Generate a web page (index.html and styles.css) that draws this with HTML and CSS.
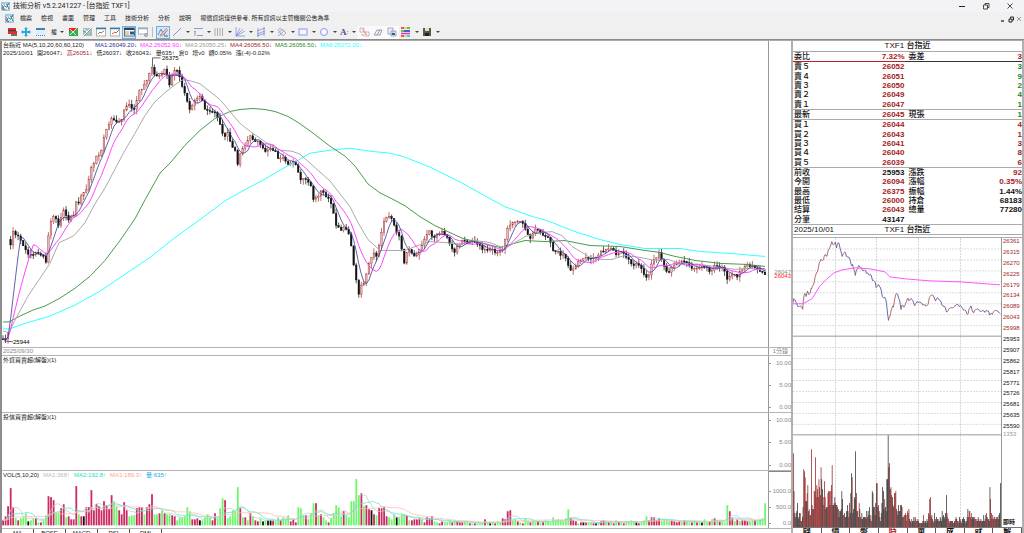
FILE: index.html
```html
<!DOCTYPE html>
<html lang="zh-Hant">
<head>
  <meta charset="UTF-8" />
  <meta name="viewport" content="width=device-width, initial-scale=1.0"/>
  <title>技術分析 v5.2.241227 - [台指近 TXF1]</title>
  <link rel="stylesheet" href="styles.css">
</head>
<body>
  <svg class="defs" aria-hidden="true">
    <symbol id="logo" viewBox="0 0 10 10"><rect width="10" height="10" fill="#9fc9d8"/><path d="M1 2l3 2 1-3 2 3 2-1-1 6-3-2-3 2z" fill="#fff"/><path d="M1 8L4 4l2 2 3-5M1 3l3 6M6 2l3 6" stroke="#27718f" fill="none"/><path d="M1 6l2 3" stroke="#d04040"/></symbol>
  </svg>

  <header class="titlebar">
    <svg class="logo"><use href="#logo"/></svg>
    <h1>技術分析 v5.2.241227 - [台指近 TXF1]</h1>
    <div class="win-buttons">
      <button aria-label="最小化"><svg viewBox="0 0 8 8"><path d="M1 4.500h6" stroke="#222" fill="none"/></svg></button>
      <button aria-label="還原"><svg viewBox="0 0 8 8"><path d="M1.500 3h4v4h-4zM3 3V1.500h4V5.500H5.500" stroke="#222" fill="none" stroke-width=".8"/></svg></button>
      <button aria-label="關閉"><svg viewBox="0 0 8 8"><path d="M1.500 1.500l5 5m0-5l-5 5" stroke="#222" fill="none" stroke-width=".8"/></svg></button>
    </div>
  </header>

  <nav class="menubar">
    <svg class="logo"><use href="#logo"/></svg>
    <a href="#">檔案</a><a href="#">檢視</a><a href="#">畫面</a><a href="#">管理</a><a href="#">工具</a><a href="#">技術分析</a><a href="#">分析</a><a href="#">說明</a>
    <span>報價資訊僅供參考, 所有資訊以主管機關公告為準</span>
    <div class="mdi-buttons">
      <button aria-label="縮小視窗"><svg viewBox="0 0 8 8"><path d="M2 6h3" stroke="#111" fill="none" stroke-width="1.200"/></svg></button>
      <button aria-label="還原視窗"><svg viewBox="0 0 8 8"><path d="M2 4h3v3H2zM3.500 3.500V2h3v3H5" stroke="#222" fill="none"/></svg></button>
      <button aria-label="關閉視窗"><svg viewBox="0 0 8 8"><path d="M2 2l4 4m0-4L2 6" stroke="#888" fill="none" stroke-width=".8"/></svg></button>
    </div>
  </nav>

  <div class="toolbar">
    <button aria-label="報價"><svg viewBox="0 0 12 12"><path d="M2 2h8v2H2zM2 5h9v3H2z" fill="#d33"/><path d="M2 4.500h8M5 9h6" stroke="#444" stroke-width="1.500"/></svg></button>
    <button aria-label="移動"><svg viewBox="0 0 12 12"><path d="M6 2v8M2 6h8" stroke="#29a8dc" stroke-width="2"/><path d="M6 1l2 2H4zM6 11l2-2H4zM1 6l2-2v4zM11 6L9 4v4z" fill="#29a8dc"/></svg></button>
    <button aria-label="面板"><svg viewBox="0 0 12 12"><rect x="2" y="2" width="9" height="8" fill="#e4eef8"/><path d="M2 3h9" stroke="#3b83bd" stroke-width="2"/><path d="M2 9.500h9" stroke="#4587bb" stroke-dasharray="1 1"/></svg></button>
    <button class="drop word">權</button>
    <button aria-label="紅綠"><svg viewBox="0 0 12 12"><rect x="2" y="2" width="9" height="8" fill="#e22"/><path d="M2 10V6l2-2 2 2 5-4v8z" fill="#2bb24c"/><path d="M3 9l7-7M3 3l6 6" stroke="#fff" stroke-width=".8"/></svg></button>
    <button aria-label="對比"><svg viewBox="0 0 12 12"><rect x="2" y="2" width="9" height="8" fill="#a8bcc4"/><path d="M2 10l8-8M3 3l6 6" stroke="#fff"/><path d="M3 10l7-7M2 5l3 1M7 8h3" stroke="#3a9a6a" stroke-width=".6"/></svg></button>
    <button aria-label="圖一"><svg viewBox="0 0 12 12"><rect x="1.500" y="2" width="9" height="8" fill="#fff" stroke="#9bb"/><path d="M1 2.500h10" stroke="#3978ad" stroke-width="1.500"/><path d="M3 8l2-2 1 1 3-2" stroke="#e65b2d" fill="none"/></svg></button>
    <button aria-label="圖二"><svg viewBox="0 0 12 12"><rect x="1.500" y="2" width="9" height="8" fill="#fff" stroke="#9bb"/><path d="M1 2.500h10" stroke="#3978ad" stroke-width="1.500"/><path d="M3 8l3-2 1 1 3-3" stroke="#e65b2d" fill="none"/></svg></button>
    <button class="on" aria-label="資訊"><svg viewBox="0 0 12 12"><rect x="1.500" y="2" width="10" height="8" fill="#fff" stroke="#579"/><path d="M1 3h10" stroke="#246" stroke-width="2"/><path d="M2 6h4M2 8h4" stroke="#e09030"/><path d="M7 5.500h4v3H7z" fill="#357"/></svg></button>
    <button aria-label="視窗"><svg viewBox="0 0 12 12"><rect x="1.500" y="2" width="9" height="6" fill="#fff" stroke="#a5b8c5"/><path d="M1 2.500h10" stroke="#8eabc2" stroke-width="1.500"/><circle cx="9" cy="9" r="1.500" fill="#ccc" stroke="#999"/></svg></button>
    <span class="sep"></span>
    <button class="on" aria-label="繪圖"><svg viewBox="0 0 12 12"><path d="M1 9l3-6 3 6 3-5" stroke="#7787bb" fill="none"/><path d="M10 2L4 8l-1 2 3-1 5-5" fill="#e6c1c1" stroke="#b57878" stroke-width=".8"/><path d="M7 10h4" stroke="#557"/></svg></button>
    <button class="drop" aria-label="直線"><svg viewBox="0 0 12 12"><path d="M2 10l8-8" stroke="#7a88cc" stroke-width=".9"/></svg></button>
    <button class="drop" aria-label="水平"><svg viewBox="0 0 12 12"><path d="M2 2.500h9M5 9.500h6M2 5l2 1" stroke="#8e9acc"/><path d="M3 5v5" stroke="#999"/></svg></button>
    <button class="drop" aria-label="垂直"><svg viewBox="0 0 12 12"><path d="M2 2v8M4.500 2v8M7 2v8M9.500 2v8" stroke="#999" stroke-width=".8"/></svg></button>
    <button class="drop" aria-label="扇形"><svg viewBox="0 0 12 12"><path d="M2 1v9h9M2 10l4-8M2 10l7-7M2 10l9-5" stroke="#7484dd" fill="none" stroke-width=".7"/></svg></button>
    <button class="drop" aria-label="通道"><svg viewBox="0 0 12 12"><path d="M2 5l8-3M2 8l8-3M2 10l8-3M3 2v9M9 1v9" stroke="#7484cc" fill="none" stroke-width=".7"/></svg></button>
    <button class="drop" aria-label="波浪"><svg viewBox="0 0 12 12"><path d="M2 4l2-2 6 5-3 3zM2 7l5-4M4 9l5-5M2 10l4-3" stroke="#8b95b5" fill="none" stroke-width=".7"/></svg></button>
    <button class="drop" aria-label="矩形"><svg viewBox="0 0 12 12"><rect x="2" y="3" width="8" height="6" stroke="#8c96ee" fill="#f3f5ff"/></svg></button>
    <button class="drop" aria-label="圓形"><svg viewBox="0 0 12 12"><circle cx="6" cy="6" r="3.500" stroke="#8a96ef" fill="#f6f7ff"/></svg></button>
    <button class="drop word letter">A<i>:</i></button>
    <button class="white" aria-label="複製"><svg viewBox="0 0 12 12"><path d="M2 2h4v4H2zM7 6h4v4H7z" fill="#fff" stroke="#c8a0a0" stroke-width=".8"/><path d="M4 3l5 6M3 8l3 2" stroke="#e06a6a" stroke-width=".7"/></svg></button>
    <button class="white" aria-label="橡皮擦"><svg viewBox="0 0 12 12"><path d="M2 9l3-5h5L8 9zM5 9l3-5" fill="#f5f5fb" stroke="#8489a5" stroke-width=".8"/></svg></button>
    <button class="white" aria-label="清除"><svg viewBox="0 0 12 12"><path d="M2 2h5v6H2zM5 5h5v5H5z" fill="#eef" stroke="#8c97a9" stroke-width=".8"/><path d="M6 8h3" stroke="#335f99" stroke-width="2"/></svg></button>
    <button class="drop" aria-label="色彩"><svg viewBox="0 0 12 12"><path d="M1 2h3M1 10h3" stroke="#e22" stroke-width="1.500"/><path d="M4 2h3M4 10h3" stroke="#e0d020" stroke-width="1.500"/><path d="M7 2h3M1 5h3" stroke="#2b2" stroke-width="1.500"/><path d="M4 5h6" stroke="#22c" stroke-width="1.500"/><path d="M1 7.500h9" stroke="#d3c" stroke-width="1.500"/><path d="M7 10h3" stroke="#2bc" stroke-width="1.500"/></svg></button>
    <button class="drop" aria-label="儲存"><svg viewBox="0 0 12 12"><rect x="2" y="2" width="8" height="8" fill="#565a45"/><path d="M4 2h4v3H4z" fill="#dfe3ce"/><path d="M4 7h4v3H4z" fill="#222"/></svg></button>
  </div>

  <main>
    <section class="left">
      <div class="row price">
        <div class="plot">
          <svg id="price" viewBox="2 41 766 308" preserveAspectRatio="none"></svg>
          <div class="legend">
            <p><b>台指近 MA(5,10,20,60,60,120)</b><span class="navy">MA1:26049.20↓</span><span class="pink">MA2:26052.90↓</span><span class="gray">MA3:26050.25↓</span><span class="red">MA4:26056.50↓</span><span class="green">MA5:26056.50↓</span><span class="cyan">MA6:26072.00↓</span></p>
            <p class="quote"><span>2025/10/01</span><span>開26047↓</span><span class="red">高26051↓</span><span>低26037↓</span><span>收26043↓</span><span>量635↑</span><span>倉0</span><span>增v0</span><span>額0.05%</span><span>漲(-4)-0.02%</span></p>
          </div>
        </div>
        <div class="axis"><div class="last"><span>26047</span><span class="now">26043</span></div></div>
      </div>
      <div class="row date"><div class="plot">2025/09/30</div><div class="axis">1分鐘</div></div>
      <div class="row pane">
        <div class="plot">外資買賣超(解盤)(1)</div>
        <div class="axis scale"><span>10.00</span><span>5.00</span><span>0.00</span></div>
      </div>
      <div class="row pane">
        <div class="plot">投信買賣超(解盤)(1)</div>
        <div class="axis scale"><span>10.00</span><span>5.00</span><span>0.00</span></div>
      </div>
      <div class="row vol">
        <div class="plot">
          <svg id="vol" viewBox="2 471 766 57" preserveAspectRatio="none"></svg>
          <p class="legend vol-legend"><span>VOL(5,10,20)</span><span class="silver">MA1:268↑</span><span class="teal">MA2:192.8↑</span><span class="salmon">MA3:189.3↑</span><span class="blue">量:635↑</span></p>
        </div>
        <div class="axis scale"><span>1000.0</span><span>500.0</span><span>0.0</span></div>
      </div>
      <div class="tabs"><a href="#">MA</a><a href="#">BOSE</a><a href="#">MACD</a><a href="#">RSI</a><a href="#">DMI</a></div>
    </section>

    <aside class="right">
      <h2>TXF1 台指近</h2>
      <table>
        <tbody>
          <tr class="ratio"><th>委比</th><td class="red">7.32%</td><th>委差</th><td class="red">3</td></tr>
          <tr><th>賣５</th><td class="red">26052</td><th></th><td class="green">3</td></tr>
          <tr><th>賣４</th><td class="red">26051</td><th></th><td class="green">9</td></tr>
          <tr><th>賣３</th><td class="red">26050</td><th></th><td class="green">2</td></tr>
          <tr><th>賣２</th><td class="red">26049</td><th></th><td class="green">4</td></tr>
          <tr><th>賣１</th><td class="red">26047</td><th></th><td class="green">1</td></tr>
          <tr class="line"><th>最新</th><td class="red">26045</td><th>現張</th><td class="green">1</td></tr>
          <tr class="line"><th>買１</th><td class="red">26044</td><th></th><td class="red">4</td></tr>
          <tr><th>買２</th><td class="red">26043</td><th></th><td class="red">1</td></tr>
          <tr><th>買３</th><td class="red">26041</td><th></th><td class="red">3</td></tr>
          <tr><th>買４</th><td class="red">26040</td><th></th><td class="red">8</td></tr>
          <tr><th>買５</th><td class="red">26039</td><th></th><td class="red">6</td></tr>
          <tr class="line"><th>前收</th><td>25953</td><th>漲跌</th><td class="red">92</td></tr>
          <tr><th>今開</th><td class="red">26094</td><th>漲幅</th><td class="red">0.35%</td></tr>
          <tr><th>最高</th><td class="red">26375</td><th>振幅</th><td>1.44%</td></tr>
          <tr><th>最低</th><td class="red">26000</td><th>持倉</th><td>68183</td></tr>
          <tr><th>結算</th><td class="red">26043</td><th>總量</th><td>77280</td></tr>
          <tr><th>分筆</th><td>43147</td><th></th><td></td></tr>
        </tbody>
      </table>
      <h2 class="day"><time>2025/10/01</time><span>TXF1 台指近</span></h2>
      <div class="mini">
        <div class="mini-plot"><svg id="mini" viewBox="793 237 208 290" preserveAspectRatio="none"></svg></div>
        <div class="mini-axis">
          <ol id="levels"></ol>
          <div class="mini-vol"><span>1353</span><b>即時</b></div>
        </div>
      </div>
      <div class="tabs mini-tabs"><a href="#">歸</a><a href="#">價</a><a href="#">盤</a><a href="#" class="red">時</a><a href="#">單</a><a href="#">成</a><a href="#">就</a><a href="#">解</a></div>
    </aside>
  </main>
  <script src="chart.js"></script>
</body>
</html>
```

FILE: styles.css
```css
* { box-sizing: border-box; }
body {
  margin: 0; height: 100vh; display: flex; flex-direction: column; overflow: hidden;
  font: 6px/9px "Liberation Sans", "Noto Sans CJK TC", sans-serif; background: #f0f0f0; color: #222;
}
h1, h2, p, ol { margin: 0; padding: 0; font-weight: normal; }
a { color: inherit; text-decoration: none; }
button { border: 0; padding: 0; background: none; font: inherit; color: inherit; }
svg { display: block; }
.defs { display: none; }
.logo { width: 9px; height: 9px; }

.titlebar {
  flex: 0 0 12px; display: flex; align-items: center; gap: 3px; padding-left: 1px;
  background: #f3f2f4;
}
.titlebar h1 { font-family: Roboto, "Noto Sans CJK TC", sans-serif; font-size: 7px; line-height: 12px; }
.win-buttons { margin-left: auto; display: flex; gap: 16px; padding-right: 10px; }
.win-buttons svg, .mdi-buttons svg { width: 8px; height: 8px; }

.menubar { flex: 0 0 13px; display: flex; align-items: center; gap: 9px; padding: 0 1px 0 5px; }
.menubar .logo { margin-right: -3px; }
.mdi-buttons { margin-left: auto; display: flex; }

.toolbar { flex: 0 0 15px; display: flex; align-items: center; padding: 0 5px; border-bottom: 1px solid #8a8a8a; }
.toolbar button { width: 14px; height: 13px; display: flex; align-items: center; border: 1px solid transparent; }
.toolbar svg { width: 12px; height: 12px; flex: none; }
.toolbar .on { background: #d5e7f7; border-color: #70b0e0; }
.toolbar .white { background: #fafafa; }
.toolbar .drop { width: 21px; }
.toolbar .drop::after { content: ""; margin-left: 3px; border: 2px solid transparent; border-top-color: #444; border-bottom: 0; }
.toolbar .word { width: 19px; padding-left: 3px; }
.toolbar .letter { width: 19px; padding-left: 1px; font: bold 9px "Liberation Serif", serif; color: #44508c; }
.letter i { color: #c66; font-size: 7px; }
.sep { width: 1px; height: 10px; background: #bbb; margin: 0 3px 0 2px; }

main { flex: 1; min-height: 0; display: flex; background: #fff; border-top: 1px solid #aaa; }
.left { flex: 1; min-width: 0; display: flex; flex-direction: column; border-left: 2px solid #8c8c8c; }
.row { display: flex; border-bottom: 1px solid #b4b4b4; min-height: 0; }
.plot { flex: 1; min-width: 0; position: relative; padding-left: 1px; line-height: 8px; }
.plot svg { position: absolute; left: 0; top: 0; width: 100%; height: 100%; }
.axis { flex: 0 0 23px; border-left: 1px solid #999; color: #888; text-align: right; position: relative; white-space: nowrap; }
.price { flex: 309; }
.date { flex: 0 0 8px; color: #888; }
.date .plot, .date .axis { line-height: 7px; }
.date .axis { padding-right: 3px; }
.pane { flex: 57; }
.vol { flex: 58; }
.scale { display: flex; flex-direction: column; justify-content: space-between; padding: 3px 0 0; }
.vol .scale { padding-top: 15px; border-top: 1px solid #888; }
.scale span::before { content: ""; position: absolute; left: 0; width: 2px; height: 1px; margin-top: 4px; background: #999; }
.last { position: absolute; right: 0; top: 75%; line-height: 4px; display: flex; flex-direction: column; }
.now { color: #f22; }

.legend { position: absolute; left: 1px; top: 0; line-height: 8px; white-space: nowrap; }
.legend p { display: flex; }
.legend b { font-weight: normal; width: 92px; }
.legend p span { width: 45px; }
.legend .quote { gap: 4px; }
.legend .quote span { width: auto; }
.vol-legend { display: flex; gap: 4px; }
.navy { color: #2b2b9c; }
.pink { color: #f3f; }
.gray { color: #999; }
.red { color: #a31d1d; }
.green { color: #1d8a1d; }
.cyan { color: #2ff; }
.silver { color: #bbb; }
.teal { color: #20e0c0; }
.salmon { color: #ffa48e; }
.blue { color: #18a8ee; }

.tabs { flex: 0 0 4px; display: flex; overflow: hidden; line-height: 8px; background: #fff; }
.tabs a { width: 32px; text-align: center; border-right: 1px solid #555; }

.right {
  flex: 0 0 233px; min-width: 0; display: flex; flex-direction: column;
  border: solid #b0b0b0; border-width: 0 2px; font-size: 8px; color: #111;
}
.right h2 { flex: 0 0 10px; font-size: 8px; line-height: 10px; text-align: center; font-weight: 500; border-bottom: 1px solid #aaa; }
.right table { border-collapse: collapse; width: 100%; height: 172px; table-layout: fixed; line-height: 9px; }
.right th, .right td { padding: 0; font-weight: bold; }
.right th { text-align: left; font-weight: 500; padding-left: 1px; }
.right td { text-align: right; }
.right th:first-child { width: 55px; }
.right th:nth-child(3) { width: 61px; padding-left: 4px; }
.ratio { border-bottom: 1px solid #333; }
.ratio > :first-child, .ratio > :nth-child(2) { border-bottom: 1px solid #b22; }
.line { border-top: 1px solid #aaa; }
.right .day { display: grid; grid-template-columns: 1fr 1fr 1fr; margin-bottom: 2px; border-top: 1px solid #aaa; line-height: 9px; }
.day time { text-align: left; padding-left: 1px; }
.mini { flex: 1; min-height: 0; display: flex; border-top: 1px solid #aaa; border-bottom: 1px solid #777; }
.mini-plot { flex: 1; min-width: 0; border-right: 1px solid #999; }
.mini-plot svg { width: 100%; height: 100%; }
.mini-axis { width: 20px; display: flex; flex-direction: column; font-size: 6px; }
.mini-axis ol { flex: 193; list-style: none; display: flex; flex-direction: column; justify-content: space-between; line-height: 7px; padding-left: 1px; }
.mini-vol { flex: 97; display: flex; flex-direction: column; justify-content: space-between; padding-left: 1px; color: #999; }
.mini-vol b { color: #111; }
.mini-tabs { flex: 0 0 5px; }
.mini-tabs a { flex: 1; font-weight: bold; }
```

FILE: chart.js
```js
// closing line as x,y knots, resampled to one value per candle
const closeKnots = [3,341, 6,341, 8,337, 10,243, 11,249, 13,233, 16,237, 18,237, 21,243, 24,250, 27,254, 30,255, 33,257, 36,254, 40,255, 43,257, 46,264, 48,239, 51,222, 54,216, 57,223, 59,229, 62,216, 64,208, 67,221, 70,221, 73,218, 75,216, 77,194, 79,205, 82,195, 85,194, 87,187, 90,177, 92,166, 95,161, 97,157, 100,155, 102,149, 105,135, 107,127, 110,123, 112,118, 117,123, 120,122, 123,117, 125,106, 128,105, 131,107, 133,112, 135,109, 137,100, 140,90, 143,88, 146,82, 148,76, 150,73, 152,67, 155,75, 160,76, 163,73, 165,69, 168,77, 170,86, 173,72, 175,70, 178,73, 181,82, 184,93, 187,101, 190,110, 193,104, 196,100, 199,96, 202,99, 205,109, 208,112, 211,113, 215,112, 218,118, 221,129, 224,142, 227,131, 230,142, 233,150, 236,153, 238,167, 241,152, 246,146, 250,137, 253,140, 258,143, 262,147, 265,152, 270,150, 275,151, 278,159, 282,158, 288,165, 294,162, 298,172, 301,181, 306,181, 311,188, 313,201, 318,198, 322,191, 326,199, 330,200, 333,213, 336,226, 340,231, 345,228, 350,237, 352,257, 355,274, 358,292, 360,299, 362,281, 365,290, 367,267, 370,263, 374,254, 377,259, 380,238, 384,223, 388,218, 392,221, 396,232, 399,238, 401,248, 404,267, 407,251, 411,254, 415,258, 420,251, 424,242, 429,230, 433,239, 438,236, 441,233, 447,238, 450,246, 455,254, 458,247, 462,242, 467,244, 472,242, 476,244, 481,248, 484,252, 490,250, 494,253, 500,253, 504,247, 508,228, 510,225, 517,222, 524,226, 526,233, 531,240, 534,231, 538,231, 542,235, 550,241, 553,251, 557,254, 565,258, 568,266, 571,274, 573,271, 577,265, 587,258, 592,261, 597,257, 602,252, 608,252, 613,249, 617,257, 621,252, 624,257, 629,263, 634,268, 638,264, 642,272, 646,279, 649,277, 652,263, 656,259, 659,253, 662,262, 665,270, 668,275, 673,268, 681,262, 687,266, 694,271, 700,267, 706,269, 711,274, 714,266, 718,268, 724,270, 727,281, 731,275, 737,278, 743,270, 748,267, 753,269, 758,271, 762,275, 765,277];

const ma20 = "3,333 9,335 15,322 28,298 40,280 50,265 59,244 66,241 74,237 85,224 95,205 105,189 115,170 125,151 135,134 145,116 155,102 165,93 175,85 183,80 190,81 200,84 210,92 220,100 230,112 240,124 250,132 260,139 270,146 280,151 292,152 300,155 310,164 320,173 330,182 340,195 350,208 358,224 368,241 380,252 405,252 415,248 430,243 445,244 460,246 475,242 490,244 500,248 508,248 515,244 525,238 540,234 552,233 562,237 572,248 582,254 590,259 600,261 612,261 625,257 640,259 655,262 668,261 680,265 700,266 720,269 735,271 750,270 765,272";
const ma60 = "3,324 9,324 20,318 33,312 45,308 60,300 75,290 90,278 105,262 120,242 135,220 145,201 160,174 170,164 185,146 200,131 215,119 230,112 240,110 253,109 265,110 275,112 288,117 298,123 312,133 330,147 345,157 355,167 368,185 380,194 392,200 405,207 420,218 435,227 450,234 463,240 480,244 500,249 510,246 525,242 545,243 565,242 590,247 620,248 645,252 660,254 675,258 695,262 720,265 745,266 765,268";
const ma120 = "3,331 10,331 20,327 50,318 75,307 100,293 125,276 150,259 175,239 200,221 225,202 250,188 265,180 280,171 295,163 310,154 330,151 350,149 370,152 390,154 405,158 430,168 460,183 485,197 505,208 530,217 550,223 575,233 600,241 620,246 645,250 680,250 700,253 730,255 765,258";
const dayAverage = "793,303 803,303 812,298 820,285 827,278 834,272 842,269 855,267 870,268 885,271 890,276 905,278 930,280 960,281 1000,284";

// volume bars: height and colour (r up, g down, k flat)
const volumes = `5r 9r 19r 37r 18r 7g 5r 7g 8g 12g 4k 5g 7g 7r 3g 3r 5g 10g 29r 28r 25r 13g 13g 17r 21r 8g 9r 6r 6r 39r 11g 9r 9k 18r 18r 35r 15r 21r 19r 15r
24r 20r 16r 30r 24g 19g 15r 11r 23r 15r 9g 10g 10g 17r 18r 18r 11g 18r 21r 31r 11g 11g 12r 15g 12r 11g 11g 10r 9r 5g 8g 8g 9g 18g 14g 6r 6r 7r 5k 5g
8g 11g 8g 5r 12r 7g 17g 27g 25r 7g 9g 15g 14g 38g 17r 8g 8r 5g 12r 9g 5r 4r 7g 4k 5g 5k 5k 5r 4g 8g 5r 8g 6g 10g 4r 6r 3r 18g 17g 10g
10r 6g 12g 22g 22r 10g 11r 8g 5g 3r 7g 12g 20g 18g 9g 14r 10g 8g 24g 24g 46g 30g 32r 19g 20r 16r 15k 11r 10g 17r 17r 18r 9r 8g 6g 11g 8k 8g 11g 11g
10r 5g 5r 6r 6r 7r 6g 3r 8r 7r 9r 4g 3g 2r 4r 3g 3g 5g 3r 5g 4r 3r 3r 4g 3g 2r 2g 2r 2g 2g 3g 6r 3g 2k 3g 2r 4g 3g 7r 6r 14r 15r 5g 6g
4r 3g 2r 7g 4g 3r 5g 4g 4r 3g 3r 5g 4g 3g 8g 5g 6g 5g 4g 7g 16g 7r 5r 4r 2g 3r 3k 3r 3g 3g 2r 2k 3g 4r 5r 4g 3r
3g 2r 5g 4r 3g 2r 4g 4g 5g 4g 3k 2r 3g 5g 9g 5r 8r 8r 5r 7r 4g 5g 5g 4g 5r 4r 3r 4r 3g 5r 4g 3g 3r 4g 3r 3g 3k 6g 3g 4r
6g 7r 5g 4r 4g 3g 20g 14r 7r 4g 6r 4g 5r 5r 4r 4g 5g 5r 4g 6g 7g 22g`.split(/\s+/).map(v => ({ h: parseInt(v), c: v.slice(-1) }));

const count = volumes.length;
const step = 762 / (count - 1);
const xAt = i => 3 + i * step;

function sample(x) {
  for (let k = 2; k < closeKnots.length; k += 2) {
    if (x <= closeKnots[k]) {
      const x0 = closeKnots[k - 2], y0 = closeKnots[k - 1];
      return y0 + (closeKnots[k + 1] - y0) * (x - x0) / (closeKnots[k] - x0);
    }
  }
  return closeKnots[closeKnots.length - 1];
}

const noise = i => { const n = Math.sin(i * 127.1) * 43758.5; return n - Math.floor(n); };
const closes = volumes.map((v, i) => sample(xAt(i)) + (i > 4 ? (noise(i) - 0.5) * 3 : 0));

function average(list, n) {
  return list.map((v, i) => {
    let sum = 0;
    for (let k = 0; k < n; k++) sum += list[Math.max(0, i - k)];
    return sum / n;
  });
}
const points = list => list.map((y, i) => xAt(i).toFixed(1) + "," + y.toFixed(1)).join(" ");
const line = (pts, color, width = 1) => `<polyline points="${pts}" fill="none" stroke="${color}" stroke-width="${width}"/>`;

// price candles
let out = "";
closes.forEach((c, i) => {
  const x = xAt(i);
  const o = i === 3 ? 241 : (i ? closes[i - 1] : c);
  const up = c < o;
  const color = up ? "#a03030" : "#111";
  const top = Math.min(o, c), h = Math.max(1, Math.abs(o - c));
  const hi = top - noise(i + 400) * 5, lo = top + h + noise(i + 800) * 5;
  out += `<path d="M${x.toFixed(1)} ${hi.toFixed(1)}V${lo.toFixed(1)}" stroke="${color}" stroke-width=".7"/>`;
  out += `<rect x="${(x - 0.8).toFixed(1)}" y="${top.toFixed(1)}" width="1.6" height="${h.toFixed(1)}" fill="${up ? "#e8b8b8" : color}" stroke="${color}" stroke-width=".4"/>`;
});
out += line(ma120, "#3ff") + line(ma60, "#4a9a4a") + line(ma20, "#aaa");
out += line(points(average(closes, 10)), "#f4f") + line(points(average(closes, 5)), "#3a3a98", 0.8);
out += `<path d="M152.500 67V58h8M4 343l9 1" stroke="#444" fill="none" stroke-width=".8"/>`;
out += `<text x="162" y="60" font-size="6">26375</text><text x="13" y="346" font-size="6">25944</text>`;
document.getElementById("price").innerHTML = out;

// volume bars
const barColor = { r: "#cc2a62", g: "#6cf76c", k: "#111" };
out = volumes.map((v, i) => `<rect x="${(xAt(i) - 0.8).toFixed(1)}" y="${525 - v.h}" width="1.8" height="${v.h}" fill="${barColor[v.c]}"/>`).join("");
[[5, "#ccc"], [10, "#5ee8d4"], [20, "#ffc0b0"]].forEach(([n, color]) => {
  out += line(points(average(volumes.map(v => 525 - v.h), n)), color, 0.8);
});
document.getElementById("vol").innerHTML = out;

// day chart, same series at a smaller scale
const miniX = i => 793 + (i - 3) * 207 / (count - 4);
const miniY = y => Math.max(237, 313 - (277 - y) * 0.345);
out = "";
for (let k = 1; k < 18; k++) {
  if (k !== 9) out += `<path d="M793 ${237 + k * 11}h208" stroke="#ddd" stroke-dasharray="2 1"/>`;
}
[835, 876, 918, 960].forEach(x => out += `<path d="M${x}.500 237V527" stroke="#ccc" stroke-dasharray="2 1" stroke-width=".8"/>`);
out += `<path d="M793 335.500h208M793 434.500h208" stroke="#999"/>`;
for (let i = 4; i < count; i++) {
  const a = miniY(closes[i - 1]), b = miniY(closes[i]);
  out += `<path d="M${miniX(i - 1).toFixed(1)} ${a.toFixed(1)}L${miniX(i).toFixed(1)} ${b.toFixed(1)}" stroke="${b < a ? "#a04848" : "#4040a0"}" stroke-width=".8"/>`;
}
out += line(dayAverage, "#f5f");
for (let i = 3; i < count; i++) {
  const v = volumes[i];
  out += `<rect x="${miniX(i).toFixed(1)}" y="${527 - v.h * 2}" width=".7" height="${v.h * 2}" fill="${v.c === "r" ? "#8c1414" : "#222"}"/>`;
}
document.getElementById("mini").innerHTML = out;

const levels = [26361, 26315, 26270, 26225, 26179, 26134, 26089, 26043, 25998, 25953, 25907, 25862, 25817, 25771, 25726, 25681, 25635, 25590];
document.getElementById("levels").innerHTML = levels.map(v => `<li class="${v > 25953 ? "red" : ""}">${v}</li>`).join("");
```
